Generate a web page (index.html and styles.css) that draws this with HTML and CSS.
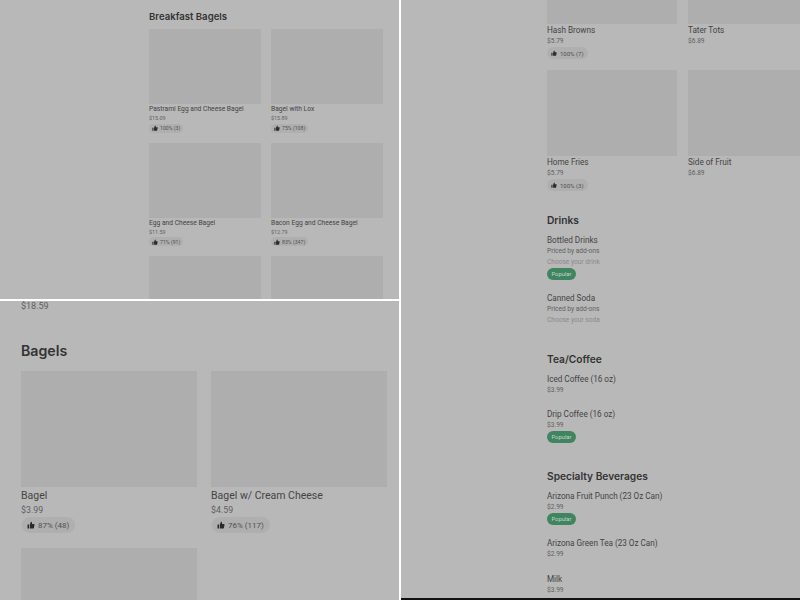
FILE: index.html
```html
<!DOCTYPE html>
<html lang="en">
<head>
    <meta charset="UTF-8">
    <title>Menu screens</title>
    <link rel="stylesheet" href="styles.css">
</head>
<body>
    <div class="screens">
        <section class="pane pane-small">
            <h2 class="section-title">Breakfast Bagels</h2>
            <div class="cards">
                <div class="card">
                    <div class="photo"></div>
                    <div class="name">Pastrami Egg and Cheese Bagel</div>
                    <div class="price">$15.09</div>
                    <div class="rating"><svg class="thumb" viewBox="0 0 16 16"><path d="M1 7h3v8H1zM5.5 7 8 1.5c1.2 0 2 .8 2 2V6h4.2c.6 0 1 .5.9 1.1l-1.3 7c-.1.5-.5.9-1 .9H5.5z"/></svg>100% (3)</div>
                </div>
                <div class="card">
                    <div class="photo"></div>
                    <div class="name">Bagel with Lox</div>
                    <div class="price">$15.89</div>
                    <div class="rating"><svg class="thumb" viewBox="0 0 16 16"><path d="M1 7h3v8H1zM5.5 7 8 1.5c1.2 0 2 .8 2 2V6h4.2c.6 0 1 .5.9 1.1l-1.3 7c-.1.5-.5.9-1 .9H5.5z"/></svg>75% (108)</div>
                </div>
                <div class="card">
                    <div class="photo"></div>
                    <div class="name">Egg and Cheese Bagel</div>
                    <div class="price">$11.59</div>
                    <div class="rating"><svg class="thumb" viewBox="0 0 16 16"><path d="M1 7h3v8H1zM5.5 7 8 1.5c1.2 0 2 .8 2 2V6h4.2c.6 0 1 .5.9 1.1l-1.3 7c-.1.5-.5.9-1 .9H5.5z"/></svg>71% (91)</div>
                </div>
                <div class="card">
                    <div class="photo"></div>
                    <div class="name">Bacon Egg and Cheese Bagel</div>
                    <div class="price">$12.79</div>
                    <div class="rating"><svg class="thumb" viewBox="0 0 16 16"><path d="M1 7h3v8H1zM5.5 7 8 1.5c1.2 0 2 .8 2 2V6h4.2c.6 0 1 .5.9 1.1l-1.3 7c-.1.5-.5.9-1 .9H5.5z"/></svg>83% (347)</div>
                </div>
                <div class="card"><div class="photo"></div></div>
                <div class="card"><div class="photo"></div></div>
            </div>
        </section>

        <section class="pane pane-right">
            <div class="cards">
                <div class="card">
                    <div class="photo photo-cut"></div>
                    <div class="name">Hash Browns</div>
                    <div class="price">$5.79</div>
                    <div class="rating"><svg class="thumb" viewBox="0 0 16 16"><path d="M1 7h3v8H1zM5.5 7 8 1.5c1.2 0 2 .8 2 2V6h4.2c.6 0 1 .5.9 1.1l-1.3 7c-.1.5-.5.9-1 .9H5.5z"/></svg>100% (7)</div>
                </div>
                <div class="card">
                    <div class="photo photo-cut"></div>
                    <div class="name">Tater Tots</div>
                    <div class="price">$6.89</div>
                </div>
                <div class="card">
                    <div class="photo"></div>
                    <div class="name">Home Fries</div>
                    <div class="price">$5.79</div>
                    <div class="rating"><svg class="thumb" viewBox="0 0 16 16"><path d="M1 7h3v8H1zM5.5 7 8 1.5c1.2 0 2 .8 2 2V6h4.2c.6 0 1 .5.9 1.1l-1.3 7c-.1.5-.5.9-1 .9H5.5z"/></svg>100% (3)</div>
                </div>
                <div class="card">
                    <div class="photo"></div>
                    <div class="name">Side of Fruit</div>
                    <div class="price">$6.89</div>
                </div>
            </div>

            <h2 class="section-title">Drinks</h2>
            <div class="items">
                <div class="item">
                    <div class="name">Bottled Drinks</div>
                    <div class="price">Priced by add-ons</div>
                    <div class="price hint">Choose your drink</div>
                    <span class="popular">Popular</span>
                </div>
                <div class="item">
                    <div class="name">Canned Soda</div>
                    <div class="price">Priced by add-ons</div>
                    <div class="price hint">Choose your soda</div>
                </div>
            </div>

            <h2 class="section-title">Tea/Coffee</h2>
            <div class="items">
                <div class="item">
                    <div class="name">Iced Coffee (16 oz)</div>
                    <div class="price">$3.99</div>
                </div>
                <div class="item">
                    <div class="name">Drip Coffee (16 oz)</div>
                    <div class="price">$3.99</div>
                    <span class="popular">Popular</span>
                </div>
            </div>

            <h2 class="section-title">Specialty Beverages</h2>
            <div class="items">
                <div class="item">
                    <div class="name">Arizona Fruit Punch (23 Oz Can)</div>
                    <div class="price">$2.99</div>
                    <span class="popular">Popular</span>
                </div>
                <div class="item">
                    <div class="name">Arizona Green Tea (23 Oz Can)</div>
                    <div class="price">$2.99</div>
                </div>
                <div class="item">
                    <div class="name">Milk</div>
                    <div class="price">$3.99</div>
                </div>
            </div>
        </section>

        <section class="pane pane-large">
            <div class="price price-top">$18.59</div>
            <h2 class="section-title">Bagels</h2>
            <div class="cards">
                <div class="card">
                    <div class="photo"></div>
                    <div class="name">Bagel</div>
                    <div class="price">$3.99</div>
                    <div class="rating"><svg class="thumb" viewBox="0 0 16 16"><path d="M1 7h3v8H1zM5.5 7 8 1.5c1.2 0 2 .8 2 2V6h4.2c.6 0 1 .5.9 1.1l-1.3 7c-.1.5-.5.9-1 .9H5.5z"/></svg>87% (48)</div>
                </div>
                <div class="card">
                    <div class="photo"></div>
                    <div class="name">Bagel w/ Cream Cheese</div>
                    <div class="price">$4.59</div>
                    <div class="rating"><svg class="thumb" viewBox="0 0 16 16"><path d="M1 7h3v8H1zM5.5 7 8 1.5c1.2 0 2 .8 2 2V6h4.2c.6 0 1 .5.9 1.1l-1.3 7c-.1.5-.5.9-1 .9H5.5z"/></svg>76% (117)</div>
                </div>
                <div class="card"><div class="photo"></div></div>
            </div>
        </section>
    </div>
</body>
</html>
```

FILE: styles.css
```css
html, body {
    margin: 0;
    height: 100%;
    background-color: #fff;
}
body {
    font-family: "Roboto", "Liberation Sans", sans-serif;
    overflow: hidden;
}
.screens {
    display: grid;
    grid-template-columns: 399px 399px;
    grid-template-rows: 299px 299px;
    gap: 2px;
    width: 800px;
    height: 600px;
}
.pane {
    background-color: #b8b8b8;
    overflow: hidden;
}
.pane-right {
    grid-column: 2;
    grid-row: 1 / span 2;
    height: 598px;
    padding-left: 146px;
    box-shadow: 0 2px 0 #111;
}
.pane-small {
    padding: 10px 0 0 149px;
}
.pane-large {
    grid-column: 1;
    padding: 0 0 0 21px;
}

.section-title {
    margin: 0;
    color: #333;
    font-family: "Inter", "Liberation Sans", sans-serif;
    font-weight: 600;
}
.cards {
    display: grid;
}
.photo {
    background-color: #aeaeae;
}
.name {
    color: #444;
    white-space: nowrap;
}
.price {
    color: #606060;
    white-space: nowrap;
}
.hint {
    color: #8a8a8a;
}
.rating {
    display: flex;
    align-items: center;
    width: fit-content;
    background-color: #afafaf;
    color: #4f4f4f;
    border-radius: 8px;
    white-space: nowrap;
}
.thumb {
    fill: #2b2b2b;
    flex: none;
}

/* top left */
.pane-small .section-title {
    font-size: 9.6px;
    line-height: 14px;
    margin-bottom: 5px;
}
.pane-small .cards {
    grid-template-columns: 112px 112px;
    column-gap: 10px;
    row-gap: 10px;
    align-items: start;
}
.pane-small .photo {
    height: 75px;
}
.pane-small .name {
    font-size: 6.7px;
    line-height: 9px;
    margin-top: 1px;
}
.pane-small .price {
    font-size: 5.4px;
    line-height: 9px;
}
.pane-small .rating {
    height: 9px;
    margin-top: 0.5px;
    padding: 0 3px;
    gap: 2px;
    font-size: 5.2px;
}
.pane-small .thumb {
    width: 6px;
    height: 6px;
}

/* bottom left */
.pane-large .price {
    font-size: 8.8px;
    line-height: 14px;
}
.pane-large .price-top {
    line-height: 10px;
    font-size: 9px;
}
.pane-large .section-title {
    font-size: 14.2px;
    line-height: 20px;
    margin-top: 30px;
    margin-bottom: 10px;
}
.pane-large .cards {
    grid-template-columns: 176px 176px;
    column-gap: 14px;
    row-gap: 15px;
    align-items: start;
}
.pane-large .photo {
    height: 116px;
}
.pane-large .name {
    font-size: 10.5px;
    line-height: 14px;
    margin-top: 2px;
}
.pane-large .rating {
    height: 16px;
    margin-left: 1px;
    padding: 0 6px 0 5px;
    gap: 3px;
    font-size: 8px;
}
.pane-large .thumb {
    width: 8px;
    height: 8px;
}

/* right column */
.pane-right .cards {
    grid-template-columns: 130px 130px;
    column-gap: 11px;
    row-gap: 11px;
    align-items: start;
}
.pane-right .photo {
    height: 86px;
}
.pane-right .photo-cut {
    height: 24px;
}
.pane-right .name {
    font-size: 8.2px;
    line-height: 11px;
    letter-spacing: -0.03px;
}
.pane-right .card .name {
    margin-top: 1px;
}
.pane-right .price {
    font-size: 6.6px;
    line-height: 11px;
}
.pane-right .rating {
    height: 12px;
    padding: 0 4px;
    gap: 3px;
    font-size: 6px;
}
.pane-right .thumb {
    width: 6px;
    height: 6px;
}
.pane-right .section-title {
    font-size: 10.2px;
    line-height: 16px;
    margin-top: 25px;
}
.pane-right .cards + .section-title {
    margin-top: 21px;
}
.items {
    display: flex;
    flex-direction: column;
    gap: 13.5px;
    margin-top: 6.5px;
}
.popular {
    display: block;
    width: fit-content;
    height: 12px;
    padding: 0 4.5px;
    line-height: 12px;
    font-size: 5.8px;
    color: #c5d6cb;
    background-color: #3f8560;
    border-radius: 6px;
}
```
